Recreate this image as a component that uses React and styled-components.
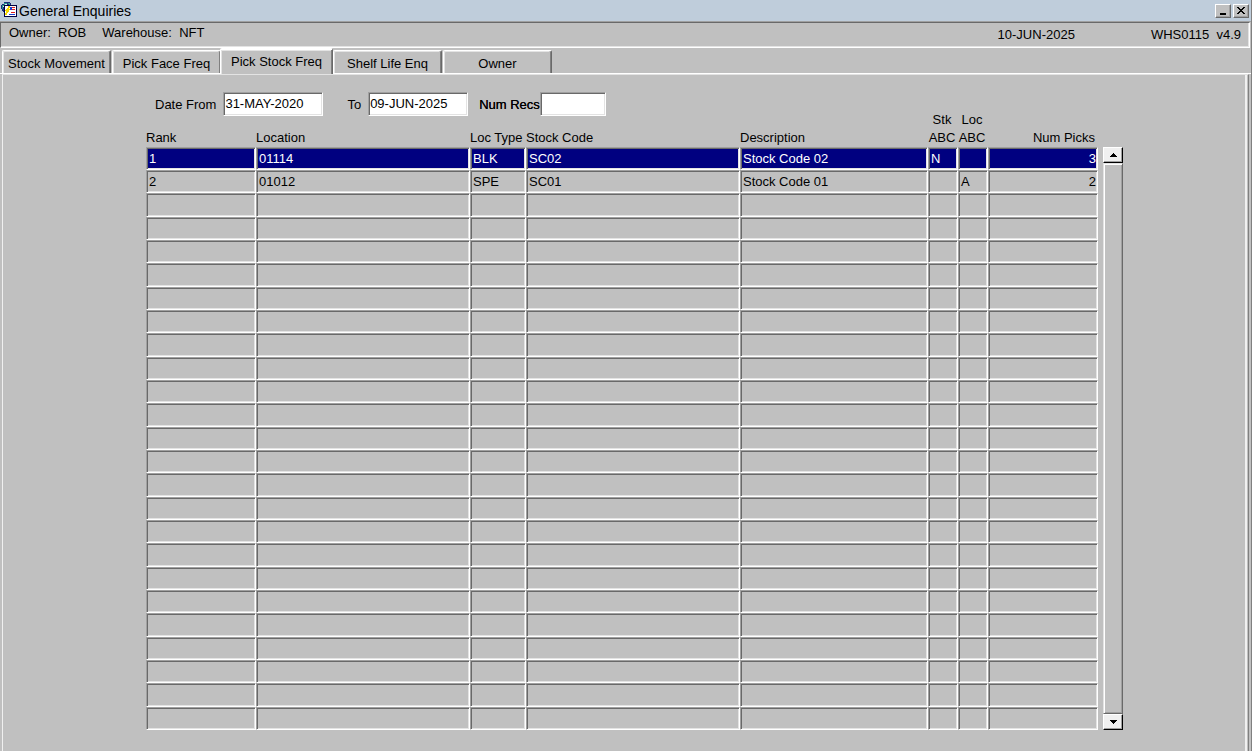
import React from "react"
import styled, { createGlobalStyle } from "styled-components"

const GlobalStyle = createGlobalStyle`
  * {
    box-sizing: border-box;
  }

  html,
  body,
  #root {
    height: 100%;
  }

  body {
    margin: 0;
    background: #c0c0c0;
    color: #000;
    font-family: "Liberation Sans", Arial, sans-serif;
    font-size: 13px;
    line-height: 16px;
  }

  button,
  input {
    font: inherit;
    color: inherit;
  }
`

const Window = styled.div`
  display: flex;
  flex-direction: column;
  min-height: 100%;
  border-right: 1px solid #808080;
`

const TitleBar = styled.header`
  display: flex;
  align-items: center;
  height: 22px;
  padding: 0 2px 0 1px;
  background: #bfcddb;
  border-bottom: 1px solid #a0a0a0;

  h1 {
    flex: 1;
    margin: 0 0 0 1px;
    font-size: 14px;
    font-weight: normal;
    line-height: 20px;
  }
`

const WindowButton = styled.button`
  display: flex;
  width: 16px;
  height: 14px;
  margin-left: 2px;
  padding: 0;
  background: #c0c0c0;
  border: 1px solid;
  border-color: #fff #696969 #696969 #fff;
  box-shadow: inset -1px -1px #a0a0a0;
`

const StatusBar = styled.div`
  display: flex;
  height: 26px;
  margin-right: 1px;
  padding: 2px 8px 0;
  border: solid;
  border-color: #696969 #fff #fff #696969;
  border-width: 1px;
  box-shadow: inset -1px -1px #e3e3e3;

  span {
    margin-right: 16px;
    white-space: pre;
  }
`

const StatusRight = styled.div`
  display: flex;
  margin: 2px 0 0 auto;

  span:first-child {
    margin-right: 76px;
  }

  span:last-child {
    margin-right: 0;
  }
`

const Tabs = styled.nav`
  display: flex;
  align-items: flex-end;
  height: 26px;
  padding-left: 2px;
  border-bottom: 1px solid #fff;
`

const Tab = styled.button`
  width: ${({ $active }) => ($active ? 113 : 109)}px;
  height: ${({ $active }) => ($active ? 26 : 23)}px;
  margin: ${({ $active }) => ($active ? "0 0 -1px -2px" : "0 1px 0 0")};
  padding: ${({ $active }) => ($active ? 0 : 3)}px 0 0;
  background: #c0c0c0;
  border: solid;
  border-width: ${({ $active }) => ($active ? "2px 1px 0 1px" : "1px 1px 0 1px")};
  border-color: #fff #696969 #c0c0c0 #fff;
  border-radius: 2px 2px 0 0;
  box-shadow: inset -1px 0 #808080, inset 1px 1px #e3e3e3;
  white-space: nowrap;
`

const Panel = styled.main`
  flex: 1;
  margin: 0 2px 0 2px;
  padding: 17px 125px 21px 143px;
  border: solid;
  border-width: 1px 1px 0 1px;
  border-color: #e3e3e3 #808080 #fff #f0f0f0;
  box-shadow: inset -1px 0 #c0c0c0, inset -3px 0 #f0f0f0;
`

const Filters = styled.form`
  display: flex;
  align-items: flex-start;
  margin-bottom: -5px;
  padding-left: 9px;

  label {
    padding-top: 5px;
  }
`

const Field = styled.input`
  width: ${({ $width }) => $width}px;
  height: 24px;
  margin: 0 ${({ $gap }) => $gap}px 0 ${({ $before }) => $before}px;
  padding: 1px 1px 3px;
  background: #fff;
  border: 1px solid;
  border-color: #a0a0a0 #fff #fff #a0a0a0;
  box-shadow: inset 1px 1px #696969, inset -1px -1px #e3e3e3;
  outline: none;
`

const NumRecsLabel = styled.label`
  text-shadow: 0 0 #000;
`

const Results = styled.div`
  display: flex;
  align-items: flex-end;
  gap: 5px;
`

const Grid = styled.table`
  flex: 1;
  width: 0;
  table-layout: fixed;
  border-collapse: separate;
  border-spacing: 0;

  tbody tr {
    height: 23px;
  }

  tbody tr:nth-child(3n) {
    height: 24px;
  }
`

const Heading = styled.th`
  height: 35px;
  padding: ${({ $stacked }) => ($stacked ? "0 2px 0 0" : "0 3px 1px 0")};
  font-weight: normal;
  line-height: ${({ $stacked }) => ($stacked ? 18 : 16)}px;
  text-align: ${({ $stacked, $right }) => ($stacked ? "center" : $right ? "right" : "left")};
  vertical-align: bottom;
  white-space: ${({ $stacked }) => ($stacked ? "normal" : "nowrap")};
`

const Cell = styled.td`
  padding: 0 1px 0 2px;
  line-height: 16px;
  background: ${({ $selected }) => ($selected ? "#000080" : "#c0c0c0")};
  color: ${({ $selected }) => ($selected ? "#fff" : "#000")};
  text-align: ${({ $right }) => ($right ? "right" : "left")};
  border: 1px solid;
  border-color: #a0a0a0 #fff #fff #a0a0a0;
  box-shadow: inset 1px 1px #696969, inset -1px -1px #e3e3e3;
`

const ScrollBar = styled.div`
  display: flex;
  flex-direction: column;
  width: 20px;
  height: 583px;
`

const ScrollButton = styled.button`
  display: flex;
  align-items: center;
  justify-content: center;
  height: 16px;
  padding: 0;
  background: #f0f0f0;
  border: solid;
  border-width: 1px;
  border-color: #fff #000 #000 #fff;
  box-shadow: inset -1px -1px #a0a0a0;
`

const Thumb = styled.div`
  flex: 1;
  border: 1px solid;
  border-color: #e3e3e3 #696969 #696969 #e3e3e3;
  box-shadow: inset 1px 1px #fff, inset -1px -1px #a0a0a0;
`

const columns = [
  { key: "rank", label: "Rank", width: 110 },
  { key: "location", label: "Location" },
  { key: "locType", label: "Loc Type", width: 56 },
  { key: "stockCode", label: "Stock Code" },
  { key: "description", label: "Description", width: 188 },
  { key: "stkAbc", label: "Stk ABC", width: 30, stacked: true },
  { key: "locAbc", label: "Loc ABC", width: 30, stacked: true },
  { key: "picks", label: "Num Picks", width: 110, right: true },
]

const records = [
  {
    rank: 1,
    location: "01114",
    locType: "BLK",
    stockCode: "SC02",
    description: "Stock Code 02",
    stkAbc: "N",
    picks: 3,
  },
  {
    rank: 2,
    location: "01012",
    locType: "SPE",
    stockCode: "SC01",
    description: "Stock Code 01",
    locAbc: "A",
    picks: 2,
  },
]

const rows = Array.from({ length: 25 }, (_, i) => records[i] || {})

const tabs = ["Stock Movement", "Pick Face Freq", "Pick Stock Freq", "Shelf Life Enq", "Owner"]

const AppIcon = () => (
  <svg width="17" height="18" viewBox="0 0 17 18" shapeRendering="crispEdges">
    <path d="M3 0h6v1h1v3H5v7H3v-1H2V9H1V7H0V3h1V2h2z" fill="#1c2f7c" />
    <path d="M3 1h3v2H4v2H2v2H1V3h2zM7 1h2v2H8V2H7z" fill="#2e9a8c" />
    <path d="M4 2h2v1H4zM2 4h2v1H2z" fill="#d8ecf4" />
    <path d="M3 3h13v12H3z" fill="#000040" />
    <path d="M4 4h11v10H4z" fill="#fff" />
    <path d="M7 4h2v2H8v1h1v1H8v2H7v1H6v2H4v-2h1v-2H4V8h1V7h1V6h1z" fill="#f4d800" />
    <path d="M9 5h2v3H9z" fill="#2040d0" />
    <path d="M11 5h3v1h-3zM11 7h3v1h-3zM10 10h4v1h-4z" fill="#e02020" />
    <path d="M8 12h6v1H8z" fill="#2040d0" />
  </svg>
)

const Arrow = ({ down }) => (
  <svg width="7" height="4" viewBox="0 0 7 4" shapeRendering="crispEdges">
    <path d={down ? "M0 0h7v1H6v1H5v1H4v1H3V3H2V2H1V1H0z" : "M3 0h1v1h1v1h1v1h1v1H0V3h1V2h1V1h1z"} />
  </svg>
)

const App = () => {
  return (
    <Window>
      <GlobalStyle />
      <TitleBar>
        <AppIcon />
        <h1>General Enquiries</h1>
        <WindowButton aria-label="Minimise">
          <svg width="14" height="12" shapeRendering="crispEdges">
            <path d="M4 8h6v2H4z" />
          </svg>
        </WindowButton>
        <WindowButton aria-label="Close">
          <svg width="14" height="12" shapeRendering="crispEdges">
            <path d="M3 2h2v1h1v1h2V3h1V2h2v1h-1v1H9v1H8v1h1v1h1v1h1v1H9V8H8V7H6v1H5v1H3V8h1V7h1V6h1V5H5V4H4V3H3z" />
          </svg>
        </WindowButton>
      </TitleBar>
      <StatusBar>
        <span>Owner:  ROB</span>
        <span>Warehouse:  NFT</span>
        <StatusRight>
          <span>10-JUN-2025</span>
          <span>WHS0115  v4.9</span>
        </StatusRight>
      </StatusBar>
      <Tabs>
        {tabs.map(tab => (
          <Tab key={tab} $active={tab === "Pick Stock Freq"}>
            {tab}
          </Tab>
        ))}
      </Tabs>
      <Panel>
        <Filters>
          <label htmlFor="from">Date From</label>
          <Field id="from" $width={100} $before={7} $gap={24} defaultValue="31-MAY-2020" />
          <label htmlFor="to">To</label>
          <Field id="to" $width={100} $before={7} $gap={11} defaultValue="09-JUN-2025" />
          <NumRecsLabel htmlFor="recs">Num Recs</NumRecsLabel>
          <Field id="recs" $width={66} $before={0} $gap={0} />
        </Filters>
        <Results>
          <Grid>
            <colgroup>
              {columns.map(c => (
                <col key={c.key} width={c.width} />
              ))}
            </colgroup>
            <thead>
              <tr>
                {columns.map(c => (
                  <Heading key={c.key} $stacked={c.stacked} $right={c.right}>
                    {c.label}
                  </Heading>
                ))}
              </tr>
            </thead>
            <tbody>
              {rows.map((row, i) => (
                <tr key={i}>
                  {columns.map(c => (
                    <Cell key={c.key} $selected={i === 0} $right={c.right}>
                      {row[c.key]}
                    </Cell>
                  ))}
                </tr>
              ))}
            </tbody>
          </Grid>
          <ScrollBar>
            <ScrollButton aria-label="Scroll up">
              <Arrow />
            </ScrollButton>
            <Thumb />
            <ScrollButton aria-label="Scroll down">
              <Arrow down />
            </ScrollButton>
          </ScrollBar>
        </Results>
      </Panel>
    </Window>
  )
}

export default App
